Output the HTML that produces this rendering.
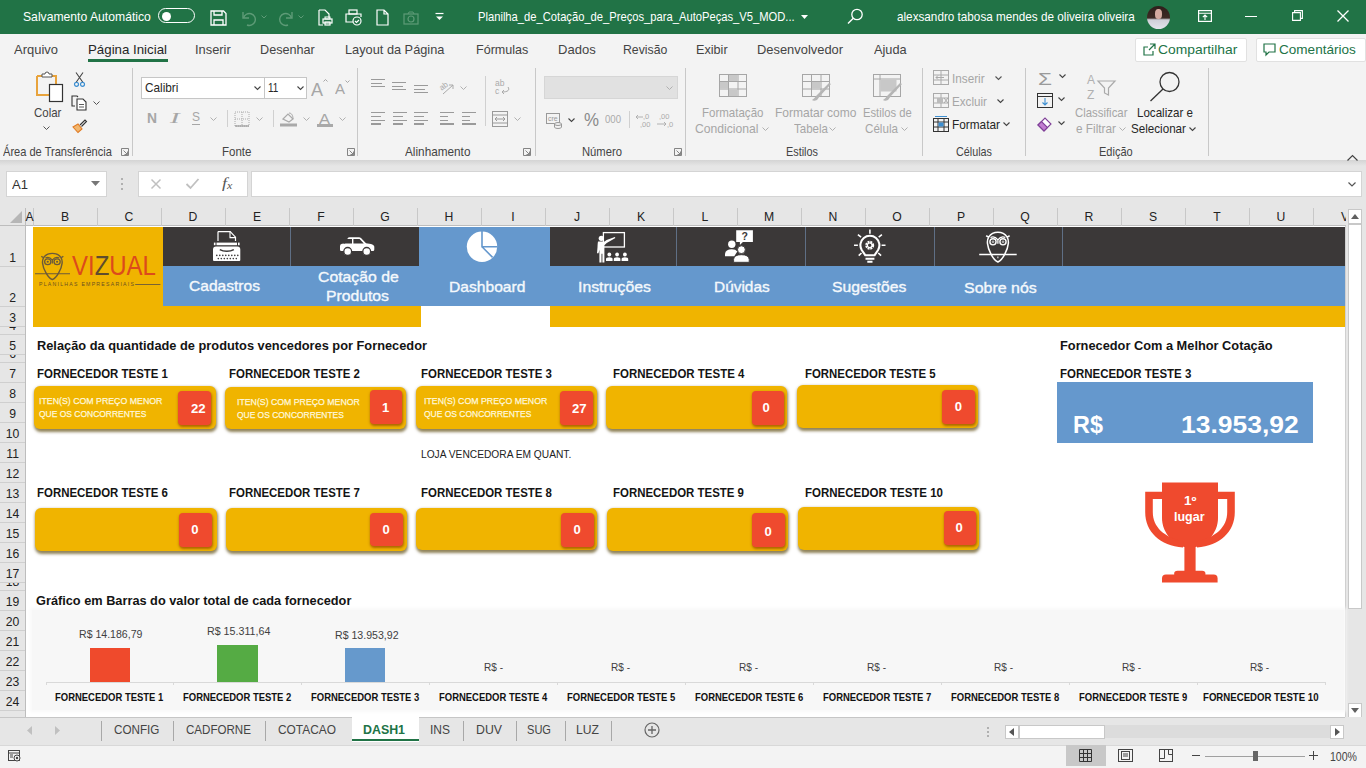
<!DOCTYPE html>
<html><head><meta charset="utf-8"><style>
html,body{margin:0;padding:0;}
body{width:1366px;height:768px;overflow:hidden;position:relative;background:#f3f3f3;font-family:"Liberation Sans",sans-serif;}
.t{position:absolute;white-space:nowrap;line-height:1;transform-origin:0 0;}
.r{position:absolute;}
svg.r{overflow:visible;}
</style></head><body>
<div class="r" style="left:0.00px;top:0.00px;width:1366.00px;height:34.00px;background:#217346;"></div>
<div class="t" style="left:23.00px;top:11.17px;font-size:12.20px;color:#fff;transform:scaleX(0.9986);">Salvamento Automático</div>
<div class="r" style="left:158px;top:8px;width:35px;height:13px;border:1.5px solid #fff;border-radius:9px;"></div>
<div class="r" style="left:161.5px;top:11.5px;width:9px;height:9px;background:#fff;border-radius:50%;"></div>
<svg class="r" style="left:210.00px;top:10.00px;" width="17" height="16" viewBox="0 0 17 16"><path d="M1 1h12.5l2.5 2.5V15H1z" fill="none" stroke="#fff" stroke-width="1.3"/><path d="M4 1v4h8V1M4 15v-5h9v5" fill="none" stroke="#fff" stroke-width="1.3"/></svg>
<svg class="r" style="left:240.00px;top:10.00px;" width="17" height="16" viewBox="0 0 17 16"><path d="M3 2v6h6" fill="none" stroke="#5e9b77" stroke-width="1.4"/><path d="M3.5 8A6 6 0 1 1 7 15" fill="none" stroke="#5e9b77" stroke-width="1.4"/></svg>
<svg class="r" style="left:261.00px;top:15.00px;" width="6" height="4" viewBox="0 0 6 4"><path d="M0.5 0.5l2.5 2.5 2.5-2.5" fill="none" stroke="#5e9b77" stroke-width="1"/></svg>
<svg class="r" style="left:278.00px;top:10.00px;" width="17" height="16" viewBox="0 0 17 16"><path d="M14 2v6H8" fill="none" stroke="#5e9b77" stroke-width="1.4"/><path d="M13.5 8A6 6 0 1 0 10 15" fill="none" stroke="#5e9b77" stroke-width="1.4"/></svg>
<svg class="r" style="left:298.00px;top:15.00px;" width="6" height="4" viewBox="0 0 6 4"><path d="M0.5 0.5l2.5 2.5 2.5-2.5" fill="none" stroke="#5e9b77" stroke-width="1"/></svg>
<svg class="r" style="left:318.00px;top:9.00px;" width="15" height="17" viewBox="0 0 15 17"><path d="M1 1h6l4 4v4M1 1v15h4" fill="none" stroke="#fff" stroke-width="1.2"/><rect x="5" y="10" width="9" height="4" fill="none" stroke="#fff" stroke-width="1.2"/><rect x="7" y="8" width="5" height="2" fill="none" stroke="#fff"/><rect x="7" y="13" width="5" height="3" fill="none" stroke="#fff" stroke-width="1.2"/></svg>
<svg class="r" style="left:345.00px;top:9.00px;" width="17" height="17" viewBox="0 0 17 17"><rect x="4" y="1" width="8" height="4" fill="none" stroke="#fff" stroke-width="1.2"/><path d="M8 13H1V5h15v3" fill="none" stroke="#fff" stroke-width="1.2"/><circle cx="12" cy="12" r="4" fill="none" stroke="#fff" stroke-width="1.2"/><path d="M10 12l1.5 1.5 2.5-2.5" fill="none" stroke="#fff" stroke-width="1.2"/></svg>
<svg class="r" style="left:376.00px;top:9.00px;" width="13" height="17" viewBox="0 0 13 17"><path d="M1 1h7l4 4v11H1z M8 1v4h4" fill="none" stroke="#fff" stroke-width="1.2"/></svg>
<svg class="r" style="left:403.00px;top:11.00px;" width="16" height="14" viewBox="0 0 16 14"><rect x="1" y="3" width="14" height="10" fill="none" stroke="#5e9b77" stroke-width="1.2"/><circle cx="8" cy="8" r="3" fill="none" stroke="#5e9b77" stroke-width="1.2"/><path d="M5 3l1-2h4l1 2" fill="none" stroke="#5e9b77"/></svg>
<svg class="r" style="left:435.00px;top:13.00px;" width="9" height="8" viewBox="0 0 9 8"><path d="M0.5 0.5h8" stroke="#fff" stroke-width="1.2"/><path d="M1 3.5l3.5 3.5 3.5-3.5z" fill="#fff"/></svg>
<div class="t" style="left:478.00px;top:11.17px;font-size:12.20px;color:#fff;transform:scaleX(0.9182);">Planilha_de_Cotação_de_Preços_para_AutoPeças_V5_MOD...</div>
<svg class="r" style="left:801.00px;top:15.00px;" width="7" height="4" viewBox="0 0 7 4"><path d="M0 0h7L3.5 4z" fill="#fff"/></svg>
<svg class="r" style="left:847.00px;top:8.00px;" width="17" height="17" viewBox="0 0 17 17"><circle cx="10" cy="6.5" r="5.2" fill="none" stroke="#fff" stroke-width="1.3"/><path d="M6.3 10.2L1 15.5" stroke="#fff" stroke-width="1.4"/></svg>
<div class="t" style="left:897.00px;top:11.17px;font-size:12.20px;color:#fff;transform:scaleX(0.9615);">alexsandro tabosa mendes de oliveira oliveira</div>
<div class="r" style="left:1146.5px;top:6px;width:23px;height:23px;border-radius:50%;overflow:hidden;background:linear-gradient(#2e1f1b 0%,#3d2a24 52%,#cfcfd8 60%,#e4e4ec 100%);"><div style="position:absolute;left:8.5px;top:3px;width:7px;height:10px;border-radius:45%;background:#d4aaa0;"></div></div>
<svg class="r" style="left:1198.00px;top:10.00px;" width="14" height="12" viewBox="0 0 14 12"><rect x="0.6" y="0.6" width="12.8" height="10.8" fill="none" stroke="#fff" stroke-width="1.2"/><path d="M0.6 3.2h12.8M7 10V5M4.8 7.2L7 5l2.2 2.2" fill="none" stroke="#fff" stroke-width="1.1"/></svg>
<div class="r" style="left:1245.00px;top:16.00px;width:12.00px;height:1.20px;background:#fff;"></div>
<svg class="r" style="left:1292.00px;top:10.00px;" width="11" height="11" viewBox="0 0 11 11"><path d="M0.6 2.6h7.8v7.8H0.6z M2.6 2.6V0.6h7.8v7.8H8.4" fill="none" stroke="#fff" stroke-width="1.1"/></svg>
<svg class="r" style="left:1337.00px;top:10.00px;" width="12" height="12" viewBox="0 0 12 12"><path d="M0.5 0.5l11 11M11.5 0.5l-11 11" stroke="#fff" stroke-width="1.3"/></svg>
<div class="r" style="left:0.00px;top:34.00px;width:1366.00px;height:31.00px;background:#f3f3f3;"></div>
<div class="t" style="left:14.00px;top:44.16px;font-size:12.80px;color:#444;transform:scaleX(1.0138);">Arquivo</div>
<div class="t" style="left:88.20px;top:44.16px;font-size:12.80px;color:#262626;transform:scaleX(1.0376);">Página Inicial</div>
<div class="t" style="left:195.30px;top:44.16px;font-size:12.80px;color:#444;transform:scaleX(1.0038);">Inserir</div>
<div class="t" style="left:260.00px;top:44.16px;font-size:12.80px;color:#444;transform:scaleX(0.9874);">Desenhar</div>
<div class="t" style="left:345.00px;top:44.16px;font-size:12.80px;color:#444;transform:scaleX(0.9976);">Layout da Página</div>
<div class="t" style="left:476.20px;top:44.16px;font-size:12.80px;color:#444;transform:scaleX(0.9804);">Fórmulas</div>
<div class="t" style="left:558.00px;top:44.16px;font-size:12.80px;color:#444;transform:scaleX(1.0189);">Dados</div>
<div class="t" style="left:623.00px;top:44.16px;font-size:12.80px;color:#444;transform:scaleX(0.9579);">Revisão</div>
<div class="t" style="left:695.80px;top:44.16px;font-size:12.80px;color:#444;transform:scaleX(0.9873);">Exibir</div>
<div class="t" style="left:757.30px;top:44.16px;font-size:12.80px;color:#444;transform:scaleX(1.0084);">Desenvolvedor</div>
<div class="t" style="left:874.00px;top:44.16px;font-size:12.80px;color:#444;transform:scaleX(0.9958);">Ajuda</div>
<div class="r" style="left:88.00px;top:59.00px;width:80.00px;height:3.00px;background:#217346;"></div>
<div class="r" style="left:1135px;top:38px;width:110px;height:22px;background:#fff;border:1px solid #e1e1e1;border-radius:2px;"></div>
<svg class="r" style="left:1142.00px;top:42.00px;" width="15" height="15" viewBox="0 0 15 15"><path d="M8 2h5v5M13 2L7 8M11 9v4H2V5h4" fill="none" stroke="#217346" stroke-width="1.2"/></svg>
<div class="t" style="left:1157.70px;top:43.66px;font-size:12.80px;color:#217346;transform:scaleX(1.0823);">Compartilhar</div>
<div class="r" style="left:1256px;top:38px;width:108px;height:22px;background:#fff;border:1px solid #e1e1e1;border-radius:2px;"></div>
<svg class="r" style="left:1263.00px;top:43.00px;" width="13" height="13" viewBox="0 0 13 13"><path d="M1 1h11v8H6l-3 3V9H1z" fill="none" stroke="#217346" stroke-width="1.2"/></svg>
<div class="t" style="left:1278.80px;top:43.66px;font-size:12.80px;color:#217346;transform:scaleX(1.0584);">Comentários</div>
<div class="r" style="left:0.00px;top:65.00px;width:1366.00px;height:95.00px;background:#f3f3f3;"></div>
<div class="r" style="left:0;top:160px;width:1366px;height:6px;background:linear-gradient(#d4d4d4,#e6e6e6);"></div>
<div class="r" style="left:132.00px;top:68.00px;width:1.00px;height:88.00px;background:#c8c8c8;"></div>
<div class="r" style="left:357.00px;top:68.00px;width:1.00px;height:88.00px;background:#c8c8c8;"></div>
<div class="r" style="left:534.60px;top:68.00px;width:1.00px;height:88.00px;background:#c8c8c8;"></div>
<div class="r" style="left:684.60px;top:68.00px;width:1.00px;height:88.00px;background:#c8c8c8;"></div>
<div class="r" style="left:921.50px;top:68.00px;width:1.00px;height:88.00px;background:#c8c8c8;"></div>
<div class="r" style="left:1025.00px;top:68.00px;width:1.00px;height:88.00px;background:#c8c8c8;"></div>
<div class="r" style="left:1207.80px;top:68.00px;width:1.00px;height:88.00px;background:#c8c8c8;"></div>
<div class="t" style="left:3.30px;top:146.17px;font-size:12.20px;color:#444;transform:scaleX(0.9080);">Área de Transferência</div>
<div class="t" style="left:222.00px;top:146.17px;font-size:12.20px;color:#444;transform:scaleX(0.9456);">Fonte</div>
<div class="t" style="left:405.00px;top:146.17px;font-size:12.20px;color:#444;transform:scaleX(0.9657);">Alinhamento</div>
<div class="t" style="left:581.80px;top:146.17px;font-size:12.20px;color:#444;transform:scaleX(0.9218);">Número</div>
<div class="t" style="left:786.40px;top:146.17px;font-size:12.20px;color:#444;transform:scaleX(0.8905);">Estilos</div>
<div class="t" style="left:955.60px;top:146.17px;font-size:12.20px;color:#444;transform:scaleX(0.8848);">Células</div>
<div class="t" style="left:1099.00px;top:146.17px;font-size:12.20px;color:#444;transform:scaleX(0.9034);">Edição</div>
<svg class="r" style="left:121.00px;top:148.00px;" width="8" height="8" viewBox="0 0 8 8"><path d="M0.5 0.5h7v7h-7z" fill="none" stroke="#777" stroke-width="0.9"/><path d="M2.5 2.5l4 4M6.5 3.5v3h-3" fill="none" stroke="#777" stroke-width="0.9"/></svg>
<svg class="r" style="left:347.00px;top:148.00px;" width="8" height="8" viewBox="0 0 8 8"><path d="M0.5 0.5h7v7h-7z" fill="none" stroke="#777" stroke-width="0.9"/><path d="M2.5 2.5l4 4M6.5 3.5v3h-3" fill="none" stroke="#777" stroke-width="0.9"/></svg>
<svg class="r" style="left:523.00px;top:148.00px;" width="8" height="8" viewBox="0 0 8 8"><path d="M0.5 0.5h7v7h-7z" fill="none" stroke="#777" stroke-width="0.9"/><path d="M2.5 2.5l4 4M6.5 3.5v3h-3" fill="none" stroke="#777" stroke-width="0.9"/></svg>
<svg class="r" style="left:673.50px;top:148.00px;" width="8" height="8" viewBox="0 0 8 8"><path d="M0.5 0.5h7v7h-7z" fill="none" stroke="#777" stroke-width="0.9"/><path d="M2.5 2.5l4 4M6.5 3.5v3h-3" fill="none" stroke="#777" stroke-width="0.9"/></svg>
<svg class="r" style="left:36.00px;top:71.00px;" width="28" height="32" viewBox="0 0 28 32"><path d="M1 5h5M15 5h5V24H1V5" fill="none" stroke="#e8a33c" stroke-width="2"/><path d="M6 6V3h3a2 2 0 0 1 4 0h3v3z" fill="#fff" stroke="#555" stroke-width="1"/><rect x="13.5" y="13.5" width="13" height="17" fill="#fff" stroke="#333" stroke-width="1.2"/></svg>
<div class="t" style="left:33.60px;top:107.16px;font-size:12.80px;color:#444;transform:scaleX(0.8957);">Colar</div>
<svg class="r" style="left:43.00px;top:126.00px;" width="7" height="4" viewBox="0 0 7 4"><path d="M0.5 0.5l3 3 3-3" fill="none" stroke="#555" stroke-width="1"/></svg>
<svg class="r" style="left:74.00px;top:72.00px;" width="11" height="15" viewBox="0 0 11 15"><path d="M2 0.5l7 10M9 0.5l-7 10" stroke="#444" stroke-width="1.1"/><circle cx="2.5" cy="12.3" r="2" fill="none" stroke="#3d8fd1" stroke-width="1.2"/><circle cx="8.5" cy="12.3" r="2" fill="none" stroke="#3d8fd1" stroke-width="1.2"/></svg>
<svg class="r" style="left:71.00px;top:95.00px;" width="16" height="16" viewBox="0 0 16 16"><path d="M4 11H1V1h5l1 1" fill="none" stroke="#333" stroke-width="1.1"/><path d="M6 4h6l3 3v8H6z" fill="#fff" stroke="#333" stroke-width="1.1"/><path d="M8 9.5h5M8 12h5" stroke="#333" stroke-width="0.8"/></svg>
<svg class="r" style="left:93.00px;top:101.00px;" width="7" height="4" viewBox="0 0 7 4"><path d="M0.5 0.5l3 3 3-3" fill="none" stroke="#555" stroke-width="1"/></svg>
<svg class="r" style="left:72.00px;top:119.00px;" width="15" height="14" viewBox="0 0 15 14"><path d="M1 8l5-3 4 5-4 3.5z" fill="#f2b66d" stroke="#e07b24" stroke-width="1.1"/><path d="M8 6l5-5 1.5 1.5-5 5" fill="none" stroke="#333" stroke-width="1.1"/></svg>
<div class="r" style="left:141px;top:77px;width:164px;height:20px;background:#fff;border:1px solid #c6c6c6;"></div>
<div class="r" style="left:264.00px;top:78.00px;width:1.00px;height:20.00px;background:#c6c6c6;"></div>
<div class="t" style="left:144.60px;top:81.67px;font-size:12.20px;color:#262626;transform:scaleX(0.9660);">Calibri</div>
<div class="t" style="left:267.70px;top:81.67px;font-size:12.20px;color:#262626;transform:scaleX(0.8133);">11</div>
<svg class="r" style="left:254.00px;top:86.00px;" width="7" height="4" viewBox="0 0 7 4"><path d="M0.5 0.5l3 3 3-3" fill="none" stroke="#444" stroke-width="1.1"/></svg>
<svg class="r" style="left:297.00px;top:86.00px;" width="7" height="4" viewBox="0 0 7 4"><path d="M0.5 0.5l3 3 3-3" fill="none" stroke="#444" stroke-width="1.1"/></svg>
<div class="t" style="left:311.00px;top:79.91px;font-size:19.00px;color:#a6a6a6;transform:scaleX(0.9469);">A</div>
<svg class="r" style="left:323.00px;top:79.00px;" width="5" height="3" viewBox="0 0 5 3"><path d="M0.5 2.5l2-2 2 2" fill="none" stroke="#a6a6a6"/></svg>
<div class="t" style="left:334.50px;top:81.30px;font-size:15.00px;color:#a6a6a6;transform:scaleX(0.9995);">A</div>
<svg class="r" style="left:345.00px;top:80.00px;" width="5" height="3" viewBox="0 0 5 3"><path d="M0.5 0.5l2 2 2-2" fill="none" stroke="#a6a6a6"/></svg>
<div class="t" style="left:146.50px;top:110.72px;font-size:14.50px;font-weight:bold;color:#a6a6a6;transform:scaleX(0.9550);">N</div>
<div class="t" style="left:170.00px;top:110.72px;font-size:14.50px;color:#a6a6a6;transform:scaleX(1.9860);font-style:italic;font-family:'Liberation Serif',serif;">I</div>
<div class="t" style="left:192.00px;top:110.92px;font-size:12.50px;color:#a6a6a6;transform:scaleX(0.9595);">S</div>
<div class="r" style="left:192.00px;top:124.00px;width:8.00px;height:1.00px;background:#a6a6a6;"></div>
<svg class="r" style="left:210.00px;top:117.00px;" width="7" height="4" viewBox="0 0 7 4"><path d="M0.5 0.5l3 3 3-3" fill="none" stroke="#b0b0b0" stroke-width="1"/></svg>
<svg class="r" style="left:256.00px;top:117.00px;" width="7" height="4" viewBox="0 0 7 4"><path d="M0.5 0.5l3 3 3-3" fill="none" stroke="#b0b0b0" stroke-width="1"/></svg>
<svg class="r" style="left:303.00px;top:117.00px;" width="7" height="4" viewBox="0 0 7 4"><path d="M0.5 0.5l3 3 3-3" fill="none" stroke="#b0b0b0" stroke-width="1"/></svg>
<svg class="r" style="left:339.00px;top:117.00px;" width="7" height="4" viewBox="0 0 7 4"><path d="M0.5 0.5l3 3 3-3" fill="none" stroke="#b0b0b0" stroke-width="1"/></svg>
<div class="r" style="left:226.50px;top:110.00px;width:1.00px;height:17.00px;background:#d0d0d0;"></div>
<div class="r" style="left:272.80px;top:110.00px;width:1.00px;height:17.00px;background:#d0d0d0;"></div>
<svg class="r" style="left:234.00px;top:111.00px;" width="16" height="16" viewBox="0 0 16 16"><path d="M1 1h14v14H1z M8 1v14 M1 8h14" fill="none" stroke="#aaa" stroke-width="1" stroke-dasharray="1 1"/><path d="M1 15h14" stroke="#999" stroke-width="1.2"/></svg>
<svg class="r" style="left:280.00px;top:110.00px;" width="17" height="17" viewBox="0 0 17 17"><path d="M3 9l5-5 5 5-4 3z" fill="none" stroke="#aaa" stroke-width="1.2"/><path d="M9 3c3 0 4 3 4 6" fill="none" stroke="#aaa"/><rect x="0" y="13.5" width="17" height="3" fill="#a9a9a9"/></svg>
<div class="t" style="left:319.00px;top:112.15px;font-size:14.00px;color:#a6a6a6;transform:scaleX(1.1779);">A</div>
<div class="r" style="left:317.00px;top:124.00px;width:16.00px;height:3.00px;background:#a9a9a9;"></div>
<div class="r" style="left:371.00px;top:79.00px;width:14.00px;height:1.20px;background:#9a9a9a;"></div>
<div class="r" style="left:371.00px;top:82.50px;width:11.00px;height:1.20px;background:#9a9a9a;"></div>
<div class="r" style="left:371.00px;top:86.00px;width:14.00px;height:1.20px;background:#9a9a9a;"></div>
<div class="r" style="left:392.00px;top:82.00px;width:14.00px;height:1.20px;background:#9a9a9a;"></div>
<div class="r" style="left:392.00px;top:85.50px;width:11.00px;height:1.20px;background:#9a9a9a;"></div>
<div class="r" style="left:392.00px;top:89.00px;width:14.00px;height:1.20px;background:#9a9a9a;"></div>
<div class="r" style="left:414.00px;top:85.00px;width:14.00px;height:1.20px;background:#9a9a9a;"></div>
<div class="r" style="left:414.00px;top:88.50px;width:11.00px;height:1.20px;background:#9a9a9a;"></div>
<div class="r" style="left:414.00px;top:92.00px;width:14.00px;height:1.20px;background:#9a9a9a;"></div>
<svg class="r" style="left:439.00px;top:79.00px;" width="17" height="17" viewBox="0 0 17 17"><text x="1" y="9" font-size="8" fill="#aaa" font-family="Liberation Sans" transform="rotate(-35 6 8)">ab</text><path d="M4 15l10-9M14 6v4M14 6h-4" fill="none" stroke="#aaa" stroke-width="1"/></svg>
<svg class="r" style="left:460.00px;top:86.00px;" width="7" height="4" viewBox="0 0 7 4"><path d="M0.5 0.5l3 3 3-3" fill="none" stroke="#b0b0b0" stroke-width="1"/></svg>
<div class="r" style="left:371.00px;top:112.00px;width:14.00px;height:1.20px;background:#9a9a9a;"></div>
<div class="r" style="left:371.00px;top:115.80px;width:10.00px;height:1.20px;background:#9a9a9a;"></div>
<div class="r" style="left:371.00px;top:119.60px;width:14.00px;height:1.20px;background:#9a9a9a;"></div>
<div class="r" style="left:371.00px;top:123.40px;width:10.00px;height:1.20px;background:#9a9a9a;"></div>
<div class="r" style="left:393.00px;top:112.00px;width:14.00px;height:1.20px;background:#9a9a9a;"></div>
<div class="r" style="left:393.00px;top:115.80px;width:10.00px;height:1.20px;background:#9a9a9a;"></div>
<div class="r" style="left:393.00px;top:119.60px;width:14.00px;height:1.20px;background:#9a9a9a;"></div>
<div class="r" style="left:393.00px;top:123.40px;width:10.00px;height:1.20px;background:#9a9a9a;"></div>
<div class="r" style="left:414.00px;top:112.00px;width:14.00px;height:1.20px;background:#9a9a9a;"></div>
<div class="r" style="left:414.00px;top:115.80px;width:10.00px;height:1.20px;background:#9a9a9a;"></div>
<div class="r" style="left:414.00px;top:119.60px;width:14.00px;height:1.20px;background:#9a9a9a;"></div>
<div class="r" style="left:414.00px;top:123.40px;width:10.00px;height:1.20px;background:#9a9a9a;"></div>
<div class="r" style="left:440.00px;top:112.00px;width:14.00px;height:1.20px;background:#9a9a9a;"></div>
<div class="r" style="left:440.00px;top:115.80px;width:8.00px;height:1.20px;background:#9a9a9a;"></div>
<div class="r" style="left:440.00px;top:119.60px;width:8.00px;height:1.20px;background:#9a9a9a;"></div>
<div class="r" style="left:440.00px;top:123.40px;width:14.00px;height:1.20px;background:#9a9a9a;"></div>
<div class="r" style="left:462.00px;top:112.00px;width:14.00px;height:1.20px;background:#9a9a9a;"></div>
<div class="r" style="left:462.00px;top:115.80px;width:8.00px;height:1.20px;background:#9a9a9a;"></div>
<div class="r" style="left:462.00px;top:119.60px;width:8.00px;height:1.20px;background:#9a9a9a;"></div>
<div class="r" style="left:462.00px;top:123.40px;width:14.00px;height:1.20px;background:#9a9a9a;"></div>
<svg class="r" style="left:494.00px;top:78.00px;" width="16" height="17" viewBox="0 0 16 17"><text x="1" y="8" font-size="8.5" fill="#aaa" font-family="Liberation Sans">ab</text><text x="1" y="15.5" font-size="8.5" fill="#aaa" font-family="Liberation Sans">c</text><path d="M14 9c2 3 0 5-6 5M10 12l-2 2 2 2" fill="none" stroke="#aaa" stroke-width="1"/></svg>
<div class="r" style="left:484.60px;top:76.00px;width:1.00px;height:50.00px;background:#d0d0d0;"></div>
<svg class="r" style="left:492.00px;top:111.00px;" width="16" height="16" viewBox="0 0 16 16"><rect x="0.5" y="0.5" width="15" height="15" fill="none" stroke="#999" stroke-width="1"/><path d="M0.5 4h15M0.5 12h15M3 8h10M3 8l2-2M3 8l2 2M13 8l-2-2M13 8l-2 2" fill="none" stroke="#999" stroke-width="1"/></svg>
<svg class="r" style="left:514.00px;top:117.00px;" width="7" height="4" viewBox="0 0 7 4"><path d="M0.5 0.5l3 3 3-3" fill="none" stroke="#b0b0b0" stroke-width="1"/></svg>
<div class="r" style="left:543.6px;top:76px;width:132px;height:21px;background:#e1e1e1;border:1px solid #d6d6d6;"></div>
<svg class="r" style="left:666.00px;top:86.00px;" width="7" height="4" viewBox="0 0 7 4"><path d="M0.5 0.5l3 3 3-3" fill="none" stroke="#b0b0b0" stroke-width="1"/></svg>
<svg class="r" style="left:546.00px;top:113.00px;" width="16" height="15" viewBox="0 0 16 15"><rect x="0.5" y="0.5" width="13" height="10" fill="none" stroke="#999"/><text x="2" y="8" font-size="7" fill="#999" font-family="Liberation Sans">cre</text><ellipse cx="12" cy="11" rx="3.5" ry="1.5" fill="#eee" stroke="#999"/><path d="M8.5 11v3a3.5 1.5 0 0 0 7 0v-3" fill="none" stroke="#999"/></svg>
<svg class="r" style="left:568.00px;top:118.00px;" width="7" height="4" viewBox="0 0 7 4"><path d="M0.5 0.5l3 3 3-3" fill="none" stroke="#444" stroke-width="1.1"/></svg>
<div class="t" style="left:583.80px;top:110.76px;font-size:18.00px;color:#8a8a8a;transform:scaleX(0.9372);">%</div>
<div class="t" style="left:605.00px;top:114.53px;font-size:10.00px;color:#aaa;transform:scaleX(0.9589);">000</div>
<div class="r" style="left:628.70px;top:111.00px;width:1.00px;height:17.00px;background:#d0d0d0;"></div>
<svg class="r" style="left:635.00px;top:112.00px;" width="18" height="16" viewBox="0 0 18 16"><text x="8" y="7" font-size="7.5" fill="#aaa" font-family="Liberation Sans">,0</text><text x="5" y="15" font-size="7.5" fill="#aaa" font-family="Liberation Sans">,00</text><path d="M1 5h7M1 5l2-2M1 5l2 2" fill="none" stroke="#aaa" stroke-width="0.9"/></svg>
<svg class="r" style="left:656.00px;top:112.00px;" width="18" height="16" viewBox="0 0 18 16"><text x="3" y="7" font-size="7.5" fill="#aaa" font-family="Liberation Sans">,00</text><text x="11" y="15" font-size="7.5" fill="#aaa" font-family="Liberation Sans">,0</text><path d="M1 12h9M10 12l-2-2M10 12l-2 2" fill="none" stroke="#aaa" stroke-width="0.9"/></svg>
<svg class="r" style="left:719.00px;top:74.00px;" width="28" height="23" viewBox="0 0 28 23"><rect x="0.5" y="0.5" width="27" height="22" fill="none" stroke="#a6a6a6" stroke-width="1"/><path d="M0.5 7.5h27M0.5 15h27M9.5 0.5v22M19 0.5v22" stroke="#a6a6a6"/><rect x="10" y="1" width="8.5" height="6" fill="#c8c8c8"/><rect x="1" y="8" width="8" height="6.5" fill="#c8c8c8"/><rect x="10" y="15.5" width="8.5" height="6.5" fill="#c8c8c8"/></svg>
<div class="t" style="left:701.80px;top:107.37px;font-size:12.20px;color:#a6a6a6;transform:scaleX(0.9448);">Formatação</div>
<div class="t" style="left:695.40px;top:122.67px;font-size:12.20px;color:#a6a6a6;transform:scaleX(0.9960);">Condicional</div>
<svg class="r" style="left:762.00px;top:127.00px;" width="6" height="4" viewBox="0 0 6 4"><path d="M0.5 0.5l3 3 3-3" fill="none" stroke="#b0b0b0" stroke-width="1"/></svg>
<svg class="r" style="left:802.00px;top:74.00px;" width="30" height="27" viewBox="0 0 30 27"><rect x="0.5" y="0.5" width="27" height="22" fill="none" stroke="#a6a6a6"/><path d="M0.5 7.5h27M0.5 15h27M9.5 0.5v22M19 0.5v22" stroke="#a6a6a6"/><rect x="10" y="8" width="8.5" height="6.5" fill="#c8c8c8"/><path d="M29 10L18 22l-3 4c-2 1-4 1-5 0 2-1 3-3 5-5L27 9z" fill="#b5b5b5"/></svg>
<div class="t" style="left:775.40px;top:107.37px;font-size:12.20px;color:#a6a6a6;transform:scaleX(0.9866);">Formatar como</div>
<div class="t" style="left:794.00px;top:122.67px;font-size:12.20px;color:#a6a6a6;transform:scaleX(0.9457);">Tabela</div>
<svg class="r" style="left:829.00px;top:127.00px;" width="6" height="4" viewBox="0 0 6 4"><path d="M0.5 0.5l3 3 3-3" fill="none" stroke="#b0b0b0" stroke-width="1"/></svg>
<svg class="r" style="left:873.00px;top:74.00px;" width="30" height="27" viewBox="0 0 30 27"><rect x="0.5" y="0.5" width="27" height="22" fill="none" stroke="#a6a6a6"/><path d="M0.5 5h27M7 0.5v22" stroke="#a6a6a6"/><rect x="7.5" y="5.5" width="16" height="12" fill="#c8c8c8"/><path d="M29 10L18 22l-3 4c-2 1-4 1-5 0 2-1 3-3 5-5L27 9z" fill="#b5b5b5"/></svg>
<div class="t" style="left:862.60px;top:107.37px;font-size:12.20px;color:#a6a6a6;transform:scaleX(0.9207);">Estilos de</div>
<div class="t" style="left:865.00px;top:122.67px;font-size:12.20px;color:#a6a6a6;transform:scaleX(0.9541);">Célula</div>
<svg class="r" style="left:901.00px;top:127.00px;" width="6" height="4" viewBox="0 0 6 4"><path d="M0.5 0.5l3 3 3-3" fill="none" stroke="#b0b0b0" stroke-width="1"/></svg>
<svg class="r" style="left:933.00px;top:70.00px;" width="16" height="15" viewBox="0 0 16 15"><rect x="0.5" y="0.5" width="15" height="14" fill="none" stroke="#aaa"/><path d="M0.5 5h15M0.5 10h15M8 0.5v14" stroke="#aaa"/><path d="M3 7.5h8M3 7.5l2-2M3 7.5l2 2" fill="none" stroke="#aaa"/></svg>
<div class="t" style="left:952.00px;top:73.17px;font-size:12.20px;color:#a6a6a6;transform:scaleX(0.9617);">Inserir</div>
<svg class="r" style="left:995.00px;top:76.00px;" width="7" height="4" viewBox="0 0 7 4"><path d="M0.5 0.5l3 3 3-3" fill="none" stroke="#555" stroke-width="1.1"/></svg>
<svg class="r" style="left:933.00px;top:93.00px;" width="16" height="15" viewBox="0 0 16 15"><rect x="0.5" y="0.5" width="15" height="14" fill="none" stroke="#aaa"/><path d="M0.5 5h15M0.5 10h15M8 0.5v14" stroke="#aaa"/><rect x="4" y="5" width="6" height="5" fill="#bbb"/><path d="M11 5l4 5M15 5l-4 5" stroke="#aaa"/></svg>
<div class="t" style="left:952.00px;top:96.17px;font-size:12.20px;color:#a6a6a6;transform:scaleX(0.9561);">Excluir</div>
<svg class="r" style="left:997.00px;top:99.00px;" width="7" height="4" viewBox="0 0 7 4"><path d="M0.5 0.5l3 3 3-3" fill="none" stroke="#444" stroke-width="1.1"/></svg>
<svg class="r" style="left:933.00px;top:116.00px;" width="16" height="16" viewBox="0 0 16 16"><rect x="0.5" y="2.5" width="15" height="13" fill="none" stroke="#333"/><path d="M0.5 6h15M0.5 11h15M5 2.5v13M11 2.5v13" stroke="#333"/><rect x="5.5" y="6.5" width="5" height="4" fill="#3d8fd1"/><path d="M2 0.5h12" stroke="#3d8fd1"/></svg>
<div class="t" style="left:952.00px;top:118.67px;font-size:12.20px;color:#262626;transform:scaleX(0.9699);">Formatar</div>
<svg class="r" style="left:1003.00px;top:122.00px;" width="7" height="4" viewBox="0 0 7 4"><path d="M0.5 0.5l3 3 3-3" fill="none" stroke="#444" stroke-width="1.1"/></svg>
<div class="t" style="left:1037.80px;top:70.61px;font-size:17.00px;color:#9a9a9a;transform:scaleX(1.3321);">Σ</div>
<svg class="r" style="left:1059.00px;top:74.00px;" width="7" height="4" viewBox="0 0 7 4"><path d="M0.5 0.5l3 3 3-3" fill="none" stroke="#444" stroke-width="1.1"/></svg>
<svg class="r" style="left:1037.00px;top:93.00px;" width="16" height="15" viewBox="0 0 16 15"><rect x="0.5" y="0.5" width="15" height="14" fill="none" stroke="#333"/><path d="M0.5 3.5h15" stroke="#333"/><path d="M8 5v7M5.5 9.5L8 12l2.5-2.5" fill="none" stroke="#3d8fd1" stroke-width="1.1"/></svg>
<svg class="r" style="left:1058.00px;top:97.00px;" width="7" height="4" viewBox="0 0 7 4"><path d="M0.5 0.5l3 3 3-3" fill="none" stroke="#444" stroke-width="1.1"/></svg>
<svg class="r" style="left:1037.00px;top:117.00px;" width="16" height="14" viewBox="0 0 16 14"><path d="M1 8l7-7 6 6-7 7z" fill="#fff" stroke="#7f3f98" stroke-width="1.1"/><path d="M1 8l3.5-3.5 6 6L7 14z" fill="#c27ed1" stroke="#7f3f98" stroke-width="1.1"/></svg>
<svg class="r" style="left:1058.00px;top:121.00px;" width="7" height="4" viewBox="0 0 7 4"><path d="M0.5 0.5l3 3 3-3" fill="none" stroke="#444" stroke-width="1.1"/></svg>
<svg class="r" style="left:1086.00px;top:73.00px;" width="30" height="27" viewBox="0 0 30 27"><text x="1" y="11" font-size="12" fill="#b0b0b0" font-family="Liberation Sans">A</text><text x="1" y="26" font-size="12" fill="#b0b0b0" font-family="Liberation Sans">Z</text><path d="M12 8h17l-6.5 7v7l-4-2v-5z" fill="none" stroke="#aaa" stroke-width="1.2"/></svg>
<div class="t" style="left:1074.50px;top:107.37px;font-size:12.20px;color:#a6a6a6;transform:scaleX(0.9331);">Classificar</div>
<div class="t" style="left:1076.00px;top:122.67px;font-size:12.20px;color:#a6a6a6;transform:scaleX(0.9674);">e Filtrar</div>
<svg class="r" style="left:1119.00px;top:127.00px;" width="6" height="4" viewBox="0 0 6 4"><path d="M0.5 0.5l3 3 3-3" fill="none" stroke="#b0b0b0" stroke-width="1"/></svg>
<svg class="r" style="left:1149.00px;top:71.00px;" width="32" height="31" viewBox="0 0 32 31"><circle cx="20.5" cy="11" r="9.5" fill="none" stroke="#333" stroke-width="1.3"/><path d="M14 18L1.5 30" stroke="#333" stroke-width="1.3"/></svg>
<div class="t" style="left:1136.50px;top:107.37px;font-size:12.20px;color:#262626;transform:scaleX(0.9491);">Localizar e</div>
<div class="t" style="left:1131.40px;top:122.67px;font-size:12.20px;color:#262626;transform:scaleX(0.9541);">Selecionar</div>
<svg class="r" style="left:1189.00px;top:127.00px;" width="7" height="4" viewBox="0 0 7 4"><path d="M0.5 0.5l3 3 3-3" fill="none" stroke="#444" stroke-width="1.1"/></svg>
<svg class="r" style="left:1347.00px;top:155.00px;" width="11" height="6" viewBox="0 0 11 6"><path d="M0.5 5.5l5-5 5 5" fill="none" stroke="#444" stroke-width="1.2"/></svg>
<div class="r" style="left:0.00px;top:166.00px;width:1366.00px;height:42.00px;background:#e6e6e6;"></div>
<div class="r" style="left:6px;top:171px;width:99px;height:24px;background:#fff;border:1px solid #d4d4d4;"></div>
<div class="t" style="left:12.00px;top:178.67px;font-size:12.20px;color:#333;transform:scaleX(1.0722);">A1</div>
<svg class="r" style="left:91.00px;top:181.00px;" width="9" height="5" viewBox="0 0 9 5"><path d="M0 0h9L4.5 5z" fill="#777"/></svg>
<div class="r" style="left:121.00px;top:178.00px;width:2.00px;height:2.00px;background:#b0b0b0;"></div>
<div class="r" style="left:121.00px;top:183.00px;width:2.00px;height:2.00px;background:#b0b0b0;"></div>
<div class="r" style="left:121.00px;top:188.00px;width:2.00px;height:2.00px;background:#b0b0b0;"></div>
<div class="r" style="left:137.5px;top:171px;width:108px;height:24px;background:#fff;border:1px solid #d4d4d4;"></div>
<svg class="r" style="left:151.00px;top:179.00px;" width="10" height="10" viewBox="0 0 10 10"><path d="M0.5 0.5l9 9M9.5 0.5l-9 9" stroke="#c0c0c0" stroke-width="1.5"/></svg>
<svg class="r" style="left:186.00px;top:178.00px;" width="13" height="11" viewBox="0 0 13 11"><path d="M0.5 6l4 4 8-9" fill="none" stroke="#c0c0c0" stroke-width="1.8"/></svg>
<div class="t" style="left:221.50px;top:177.15px;font-size:14.00px;color:#555;transform:scaleX(1.2856);font-style:italic;font-family:'Liberation Serif',serif;">f</div>
<div class="t" style="left:226.50px;top:180.53px;font-size:10.00px;color:#555;transform:scaleX(1.2000);font-style:italic;font-family:'Liberation Serif',serif;">x</div>
<div class="r" style="left:250.5px;top:171px;width:1109px;height:24px;background:#fff;border:1px solid #d4d4d4;"></div>
<svg class="r" style="left:1348.00px;top:182.00px;" width="8" height="5" viewBox="0 0 8 5"><path d="M0.5 0.5l3.5 3.5 3.5-3.5" fill="none" stroke="#555" stroke-width="1.2"/></svg>
<div class="r" style="left:0.00px;top:208.00px;width:1347.00px;height:18.00px;background:#e6e6e6;"></div>
<div class="r" style="left:0.00px;top:225.00px;width:1347.00px;height:1.00px;background:#bdbdbd;"></div>
<svg class="r" style="left:10.00px;top:211.00px;" width="12" height="12" viewBox="0 0 12 12"><path d="M12 0v12H0z" fill="#b6b6b6"/></svg>
<div class="r" style="left:25.00px;top:208.00px;width:1.00px;height:18.00px;background:#bdbdbd;"></div>
<div class="r" style="left:33.00px;top:208.00px;width:1.00px;height:18.00px;background:#c8c8c8;"></div>
<div class="t" style="left:25.43px;top:210.67px;font-size:12.20px;color:#222;">A</div>
<div class="r" style="left:97.00px;top:208.00px;width:1.00px;height:18.00px;background:#c8c8c8;"></div>
<div class="t" style="left:60.93px;top:210.67px;font-size:12.20px;color:#222;">B</div>
<div class="r" style="left:161.00px;top:208.00px;width:1.00px;height:18.00px;background:#c8c8c8;"></div>
<div class="t" style="left:124.59px;top:210.67px;font-size:12.20px;color:#222;">C</div>
<div class="r" style="left:225.00px;top:208.00px;width:1.00px;height:18.00px;background:#c8c8c8;"></div>
<div class="t" style="left:188.59px;top:210.67px;font-size:12.20px;color:#222;">D</div>
<div class="r" style="left:289.00px;top:208.00px;width:1.00px;height:18.00px;background:#c8c8c8;"></div>
<div class="t" style="left:252.93px;top:210.67px;font-size:12.20px;color:#222;">E</div>
<div class="r" style="left:353.00px;top:208.00px;width:1.00px;height:18.00px;background:#c8c8c8;"></div>
<div class="t" style="left:317.27px;top:210.67px;font-size:12.20px;color:#222;">F</div>
<div class="r" style="left:417.00px;top:208.00px;width:1.00px;height:18.00px;background:#c8c8c8;"></div>
<div class="t" style="left:380.26px;top:210.67px;font-size:12.20px;color:#222;">G</div>
<div class="r" style="left:481.00px;top:208.00px;width:1.00px;height:18.00px;background:#c8c8c8;"></div>
<div class="t" style="left:444.59px;top:210.67px;font-size:12.20px;color:#222;">H</div>
<div class="r" style="left:545.00px;top:208.00px;width:1.00px;height:18.00px;background:#c8c8c8;"></div>
<div class="t" style="left:511.31px;top:210.67px;font-size:12.20px;color:#222;">I</div>
<div class="r" style="left:609.00px;top:208.00px;width:1.00px;height:18.00px;background:#c8c8c8;"></div>
<div class="t" style="left:573.95px;top:210.67px;font-size:12.20px;color:#222;">J</div>
<div class="r" style="left:673.00px;top:208.00px;width:1.00px;height:18.00px;background:#c8c8c8;"></div>
<div class="t" style="left:636.93px;top:210.67px;font-size:12.20px;color:#222;">K</div>
<div class="r" style="left:737.00px;top:208.00px;width:1.00px;height:18.00px;background:#c8c8c8;"></div>
<div class="t" style="left:701.61px;top:210.67px;font-size:12.20px;color:#222;">L</div>
<div class="r" style="left:801.00px;top:208.00px;width:1.00px;height:18.00px;background:#c8c8c8;"></div>
<div class="t" style="left:763.92px;top:210.67px;font-size:12.20px;color:#222;">M</div>
<div class="r" style="left:865.00px;top:208.00px;width:1.00px;height:18.00px;background:#c8c8c8;"></div>
<div class="t" style="left:828.59px;top:210.67px;font-size:12.20px;color:#222;">N</div>
<div class="r" style="left:929.00px;top:208.00px;width:1.00px;height:18.00px;background:#c8c8c8;"></div>
<div class="t" style="left:892.26px;top:210.67px;font-size:12.20px;color:#222;">O</div>
<div class="r" style="left:993.00px;top:208.00px;width:1.00px;height:18.00px;background:#c8c8c8;"></div>
<div class="t" style="left:956.93px;top:210.67px;font-size:12.20px;color:#222;">P</div>
<div class="r" style="left:1057.00px;top:208.00px;width:1.00px;height:18.00px;background:#c8c8c8;"></div>
<div class="t" style="left:1020.26px;top:210.67px;font-size:12.20px;color:#222;">Q</div>
<div class="r" style="left:1121.00px;top:208.00px;width:1.00px;height:18.00px;background:#c8c8c8;"></div>
<div class="t" style="left:1084.59px;top:210.67px;font-size:12.20px;color:#222;">R</div>
<div class="r" style="left:1185.00px;top:208.00px;width:1.00px;height:18.00px;background:#c8c8c8;"></div>
<div class="t" style="left:1148.93px;top:210.67px;font-size:12.20px;color:#222;">S</div>
<div class="r" style="left:1249.00px;top:208.00px;width:1.00px;height:18.00px;background:#c8c8c8;"></div>
<div class="t" style="left:1213.27px;top:210.67px;font-size:12.20px;color:#222;">T</div>
<div class="r" style="left:1313.00px;top:208.00px;width:1.00px;height:18.00px;background:#c8c8c8;"></div>
<div class="t" style="left:1276.59px;top:210.67px;font-size:12.20px;color:#222;">U</div>
<div class="r" style="left:1377.00px;top:208.00px;width:1.00px;height:18.00px;background:#c8c8c8;"></div>
<div class="t" style="left:1341.00px;top:210.67px;font-size:12.20px;color:#222;">V</div>
<div class="r" style="left:0.00px;top:226.00px;width:25.00px;height:491.00px;background:#e6e6e6;"></div>
<div class="r" style="left:25.00px;top:226.00px;width:1.00px;height:491.00px;background:#bdbdbd;"></div>
<div class="r" style="left:0;top:226px;width:25px;height:491px;overflow:hidden;">
<div class="r" style="left:0.00px;top:40.00px;width:25.00px;height:1.00px;background:#cfcfcf;"></div>
<div class="t" style="left:9.21px;top:26.17px;font-size:12.20px;color:#222;">1</div>
<div class="r" style="left:0.00px;top:80.00px;width:25.00px;height:1.00px;background:#cfcfcf;"></div>
<div class="t" style="left:9.21px;top:66.17px;font-size:12.20px;color:#222;">2</div>
<div class="r" style="left:0.00px;top:100.00px;width:25.00px;height:1.00px;background:#cfcfcf;"></div>
<div class="t" style="left:9.21px;top:86.17px;font-size:12.20px;color:#222;">3</div>
<div class="r" style="left:0.00px;top:108.00px;width:25.00px;height:1.00px;background:#cfcfcf;"></div>
<div class="r" style="left:0;top:101px;width:25px;height:7px;overflow:hidden;">
<div class="t" style="left:9.21px;top:-7.13px;font-size:12.20px;color:#222;">4</div>
</div>
<div class="r" style="left:0.00px;top:128.00px;width:25.00px;height:1.00px;background:#cfcfcf;"></div>
<div class="t" style="left:9.21px;top:114.17px;font-size:12.20px;color:#222;">5</div>
<div class="r" style="left:0.00px;top:136.00px;width:25.00px;height:1.00px;background:#cfcfcf;"></div>
<div class="r" style="left:0;top:129px;width:25px;height:7px;overflow:hidden;">
<div class="t" style="left:9.21px;top:-7.13px;font-size:12.20px;color:#222;">6</div>
</div>
<div class="r" style="left:0.00px;top:156.00px;width:25.00px;height:1.00px;background:#cfcfcf;"></div>
<div class="t" style="left:9.21px;top:142.17px;font-size:12.20px;color:#222;">7</div>
<div class="r" style="left:0.00px;top:176.00px;width:25.00px;height:1.00px;background:#cfcfcf;"></div>
<div class="t" style="left:9.21px;top:162.17px;font-size:12.20px;color:#222;">8</div>
<div class="r" style="left:0.00px;top:196.00px;width:25.00px;height:1.00px;background:#cfcfcf;"></div>
<div class="t" style="left:9.21px;top:182.17px;font-size:12.20px;color:#222;">9</div>
<div class="r" style="left:0.00px;top:216.00px;width:25.00px;height:1.00px;background:#cfcfcf;"></div>
<div class="t" style="left:5.81px;top:202.17px;font-size:12.20px;color:#222;">10</div>
<div class="r" style="left:0.00px;top:236.00px;width:25.00px;height:1.00px;background:#cfcfcf;"></div>
<div class="t" style="left:6.27px;top:222.17px;font-size:12.20px;color:#222;">11</div>
<div class="r" style="left:0.00px;top:256.00px;width:25.00px;height:1.00px;background:#cfcfcf;"></div>
<div class="t" style="left:5.81px;top:242.17px;font-size:12.20px;color:#222;">12</div>
<div class="r" style="left:0.00px;top:276.00px;width:25.00px;height:1.00px;background:#cfcfcf;"></div>
<div class="t" style="left:5.81px;top:262.17px;font-size:12.20px;color:#222;">13</div>
<div class="r" style="left:0.00px;top:296.00px;width:25.00px;height:1.00px;background:#cfcfcf;"></div>
<div class="t" style="left:5.81px;top:282.17px;font-size:12.20px;color:#222;">14</div>
<div class="r" style="left:0.00px;top:316.00px;width:25.00px;height:1.00px;background:#cfcfcf;"></div>
<div class="t" style="left:5.81px;top:302.17px;font-size:12.20px;color:#222;">15</div>
<div class="r" style="left:0.00px;top:336.00px;width:25.00px;height:1.00px;background:#cfcfcf;"></div>
<div class="t" style="left:5.81px;top:322.17px;font-size:12.20px;color:#222;">16</div>
<div class="r" style="left:0.00px;top:356.00px;width:25.00px;height:1.00px;background:#cfcfcf;"></div>
<div class="t" style="left:5.81px;top:342.17px;font-size:12.20px;color:#222;">17</div>
<div class="r" style="left:0.00px;top:364.00px;width:25.00px;height:1.00px;background:#cfcfcf;"></div>
<div class="r" style="left:0;top:357px;width:25px;height:7px;overflow:hidden;">
<div class="t" style="left:5.81px;top:-7.13px;font-size:12.20px;color:#222;">18</div>
</div>
<div class="r" style="left:0.00px;top:384.00px;width:25.00px;height:1.00px;background:#cfcfcf;"></div>
<div class="t" style="left:5.81px;top:370.17px;font-size:12.20px;color:#222;">19</div>
<div class="r" style="left:0.00px;top:404.00px;width:25.00px;height:1.00px;background:#cfcfcf;"></div>
<div class="t" style="left:5.81px;top:390.17px;font-size:12.20px;color:#222;">20</div>
<div class="r" style="left:0.00px;top:424.00px;width:25.00px;height:1.00px;background:#cfcfcf;"></div>
<div class="t" style="left:5.81px;top:410.17px;font-size:12.20px;color:#222;">21</div>
<div class="r" style="left:0.00px;top:444.00px;width:25.00px;height:1.00px;background:#cfcfcf;"></div>
<div class="t" style="left:5.81px;top:430.17px;font-size:12.20px;color:#222;">22</div>
<div class="r" style="left:0.00px;top:464.00px;width:25.00px;height:1.00px;background:#cfcfcf;"></div>
<div class="t" style="left:5.81px;top:450.17px;font-size:12.20px;color:#222;">23</div>
<div class="r" style="left:0.00px;top:484.00px;width:25.00px;height:1.00px;background:#cfcfcf;"></div>
<div class="t" style="left:5.81px;top:470.17px;font-size:12.20px;color:#222;">24</div>
</div>
<div class="r" style="left:26.00px;top:226.00px;width:1321.00px;height:491.00px;background:#ffffff;"></div>
<div class="r" style="left:1344.50px;top:226.00px;width:1.00px;height:491.00px;background:#d0d0d0;"></div>
<div class="r" style="left:1345.50px;top:208.00px;width:20.50px;height:509.00px;background:#e6e6e6;"></div>
<div class="r" style="left:1348px;top:209px;width:14px;height:15px;background:#fff;border:1px solid #c8c8c8;box-sizing:border-box;"></div>
<svg class="r" style="left:1351.00px;top:214.00px;" width="8" height="5" viewBox="0 0 8 5"><path d="M0 5h8L4 0z" fill="#606060"/></svg>
<div class="r" style="left:1348px;top:224px;width:14px;height:385px;background:#fff;border:1px solid #c8c8c8;box-sizing:border-box;"></div>
<div class="r" style="left:1348px;top:703px;width:14px;height:15px;background:#fff;border:1px solid #c8c8c8;box-sizing:border-box;"></div>
<svg class="r" style="left:1351.00px;top:708.00px;" width="8" height="5" viewBox="0 0 8 5"><path d="M0 0h8L4 5z" fill="#606060"/></svg>
<div class="r" style="left:33.00px;top:227.00px;width:129.50px;height:99.70px;background:#f0b400;"></div>
<div class="r" style="left:33.00px;top:305.50px;width:388.00px;height:21.20px;background:#f0b400;"></div>
<div class="r" style="left:549.50px;top:305.50px;width:795.00px;height:21.20px;background:#f0b400;"></div>
<div class="r" style="left:162.50px;top:227.00px;width:1182.00px;height:39.00px;background:#3b3838;"></div>
<div class="r" style="left:162.50px;top:266.00px;width:1182.00px;height:39.50px;background:#6598cd;"></div>
<div class="r" style="left:419.00px;top:227.00px;width:130.50px;height:78.50px;background:#6598cd;"></div>
<div class="r" style="left:290.30px;top:227.00px;width:1.00px;height:39.00px;background:#5f6f85;"></div>
<div class="r" style="left:676.00px;top:227.00px;width:1.00px;height:39.00px;background:#5f6f85;"></div>
<div class="r" style="left:805.00px;top:227.00px;width:1.00px;height:39.00px;background:#5f6f85;"></div>
<div class="r" style="left:934.30px;top:227.00px;width:1.00px;height:39.00px;background:#5f6f85;"></div>
<div class="r" style="left:1062.40px;top:227.00px;width:1.00px;height:39.00px;background:#5f6f85;"></div>
<div class="t" style="left:72px;top:251.77px;font-size:27.2px;color:#dc4a1c;transform:scaleX(0.882);">VI<span style="color:#5e4c2e">Z</span>UAL</div>
<svg class="r" style="left:0;top:0;" width="400" height="400" viewBox="0 0 400 400"><g transform="translate(-882.7,49.0) scale(0.937,0.88)" fill="none" stroke="#6b5a3a"><path d="M986.2 235.6q1.5 1.5 2.6 1.2q3-4.6 9.1-4.6t9.1 4.6q1.1 0.3 2.6-1.2M988.8 236.8q-1.8 3-1.3 6.8q0.5 5 3.5 10.5q3 6 6.9 7.9q3.9-1.9 6.9-7.9q3-5.5 3.5-10.5q0.5-3.8-1.3-6.8" stroke-width="1.5"/><path d="M990.5 237.5q4-2 7.4 2.3q3.4-4.3 7.4-2.3M997.9 239.8v4" stroke-width="1.3"/><circle cx="993" cy="241.8" r="3.3" stroke-width="1.4"/><circle cx="1003" cy="241.8" r="3.3" stroke-width="1.4"/><circle cx="993" cy="241.8" r="1.2" fill="#6b5a3a" stroke="none"/><circle cx="1003" cy="241.8" r="1.2" fill="#6b5a3a" stroke="none"/></g><path d="M35 273.7h35" stroke="#6b5a3a" stroke-width="1.1"/><path d="M135.2 284.5h25.2" stroke="#6b5a3a" stroke-width="0.9"/></svg>
<div class="t" style="left:39px;top:281.80px;font-size:5.2px;color:#6b5020;letter-spacing:1.24px;">PLANILHAS EMPRESARIAIS</div>
<svg class="r" style="left:212.50px;top:231.00px;" width="28" height="30" viewBox="0 0 28 30"><path d="M5 0.6h12.2l5.3 5.6V10 M5 0.6V10" fill="none" stroke="#fff" stroke-width="1.2"/><path d="M17 0.6v6h5.5" fill="none" stroke="#fff" stroke-width="1.1"/><rect x="3.5" y="11.6" width="20.5" height="2.6" fill="#fff"/><rect x="0.9" y="11.6" width="1.6" height="2.6" fill="#fff"/><rect x="25" y="11.6" width="1.6" height="2.6" fill="#fff"/><path d="M0 18.5a3 3 0 0 1 3-3h21.3a3 3 0 0 1 3 3V29a1 1 0 0 1-1 1H1a1 1 0 0 1-1-1z" fill="#fff"/><path d="M6.8 18.6c4 2.2 10 2.2 14 0" fill="none" stroke="#3b3838" stroke-width="1.6"/><circle cx="3.8" cy="24.4" r="0.8" fill="#3b3838"/><circle cx="6.8" cy="24.4" r="0.8" fill="#3b3838"/><circle cx="9.8" cy="24.4" r="0.8" fill="#3b3838"/><circle cx="12.8" cy="24.4" r="0.8" fill="#3b3838"/><circle cx="15.8" cy="24.4" r="0.8" fill="#3b3838"/><circle cx="18.8" cy="24.4" r="0.8" fill="#3b3838"/><circle cx="21.8" cy="24.4" r="0.8" fill="#3b3838"/><circle cx="24.8" cy="24.4" r="0.8" fill="#3b3838"/><circle cx="5.3" cy="27.6" r="0.8" fill="#3b3838"/><circle cx="8.3" cy="27.6" r="0.8" fill="#3b3838"/><circle cx="11.3" cy="27.6" r="0.8" fill="#3b3838"/><circle cx="14.3" cy="27.6" r="0.8" fill="#3b3838"/><circle cx="17.3" cy="27.6" r="0.8" fill="#3b3838"/><circle cx="20.3" cy="27.6" r="0.8" fill="#3b3838"/><circle cx="23.3" cy="27.6" r="0.8" fill="#3b3838"/></svg>
<svg class="r" style="left:0;top:0;" width="1366" height="768" viewBox="0 0 1366 768"><path d="M340 249.5V246q0-2 2-2.3l3-0.3 3-5.6q0.5-0.6 1.5-0.6h9.5q1 0 2 0.7l5 5.4 5 0.6q3 0.5 3.3 2.7v3q0 1.5-1.3 1.5H341.3q-1.3 0-1.3-1.5z" fill="#fff"/><path d="M343.8 243.5l3-4.6h5.2v4.6zM353.4 238.9h6.2l4.2 4.6h-10.4z" fill="#3b3838"/><circle cx="347.7" cy="251.4" r="3.9" fill="#fff" stroke="#3b3838" stroke-width="1.3"/><circle cx="366.7" cy="251.4" r="3.9" fill="#fff" stroke="#3b3838" stroke-width="1.3"/><circle cx="482" cy="246.8" r="15.2" fill="#fff"/><path d="M482 231v15.8h15.5M482 246.8l10.6 10.6" fill="none" stroke="#6598cd" stroke-width="1.6"/><rect x="603.4" y="232.6" width="21" height="14.4" fill="none" stroke="#fff" stroke-width="1.3"/><circle cx="601.3" cy="238.3" r="2.6" fill="#fff"/><path d="M598.2 241.5h6.4l2-1.6 8.2-3 0.6 1-8.7 5.2-2.3 2.2v17.2h-2v-8.8h-0.9v8.8h-2.1v-12.8l-0.9 3.6h-1.5l0.5-6q0.2-5.8 0.7-5.8z" fill="#fff"/><circle cx="609.3" cy="254.5" r="1.9" fill="#fff"/><path d="M606.0 261v-2q0-1.8 3.3-1.8t3.3 1.8v2z" fill="#fff"/><circle cx="617.1" cy="254.5" r="1.9" fill="#fff"/><path d="M613.8 261v-2q0-1.8 3.3-1.8t3.3 1.8v2z" fill="#fff"/><circle cx="624.9" cy="254.5" r="1.9" fill="#fff"/><path d="M621.6 261v-2q0-1.8 3.3-1.8t3.3 1.8v2z" fill="#fff"/><path d="M736.2 230.2h16.7v11.7h-10l-3 3.1v-3.1h-3.7z" fill="#fff"/><text x="741.6" y="240" font-size="10.5" font-weight="bold" fill="#3b3838" font-family="Liberation Sans">?</text><circle cx="731.8" cy="244.2" r="3.7" fill="#fff"/><path d="M725 256.2v-2.5q0.5-4.5 6.8-4.5q4 0 5.5 2.2l-3 4.8z" fill="#fff"/><circle cx="741.4" cy="249.7" r="3.9" fill="#fff" stroke="#3b3838" stroke-width="0.9"/><path d="M733.6 262.3v-3q0.5-4.6 7.8-4.6t7.8 4.6v3z" fill="#fff" stroke="#3b3838" stroke-width="0.9"/><path d="M865.2 255.2l-3.5-5.2a9.5 9.5 0 1 1 16.4 0l-3.5 5.2z" fill="none" stroke="#fff" stroke-width="2.1"/><path d="M865.5 258.7h8.9M867.3 261.8h5.2" stroke="#fff" stroke-width="1.9"/><path d="M869.9 229.4v4.4M854 245.3h3.9M881.6 245.3h3.9M857.9 234.6l3.2 2.6M881.9 234.6l-3.2 2.6M858.7 255.7l2.8-2.7M881.1 255.7l-2.8-2.7" stroke="#fff" stroke-width="1.6"/><circle cx="869.7" cy="245.3" r="3.4" fill="none" stroke="#fff" stroke-width="2.2" stroke-dasharray="1.9 0.8"/><circle cx="869.7" cy="245.3" r="2.3" fill="none" stroke="#fff" stroke-width="1.2"/><path d="M979.2 254.4h37.5" stroke="#fff" stroke-width="1.5"/><path d="M986.2 235.6q1.5 1.5 2.6 1.2q3-4.6 9.1-4.6t9.1 4.6q1.1 0.3 2.6-1.2M988.8 236.8q-1.8 3-1.3 6.8q0.5 5 3.5 10.5q3 6 6.9 7.9q3.9-1.9 6.9-7.9q3-5.5 3.5-10.5q0.5-3.8-1.3-6.8" fill="none" stroke="#fff" stroke-width="1.5"/><path d="M990.5 237.5q4-2 7.4 2.3q3.4-4.3 7.4-2.3M997.9 239.8v4" fill="none" stroke="#fff" stroke-width="1.3"/><circle cx="993" cy="241.8" r="3.1" fill="none" stroke="#fff" stroke-width="1.4"/><circle cx="1003" cy="241.8" r="3.1" fill="none" stroke="#fff" stroke-width="1.4"/><circle cx="993" cy="241.8" r="1.4" fill="#aaa"/><circle cx="1003" cy="241.8" r="1.4" fill="#aaa"/><path d="M997.9 256.5v1.8" stroke="#fff" stroke-width="1"/></svg>
<div class="t" style="left:189.00px;top:279.34px;font-size:14.60px;color:#f4f8fc;transform:scaleX(1.0670);-webkit-text-stroke:0.35px #f4f8fc;">Cadastros</div>
<div class="t" style="left:317.50px;top:269.64px;font-size:14.60px;color:#f4f8fc;transform:scaleX(1.0820);-webkit-text-stroke:0.35px #f4f8fc;">Cotação de</div>
<div class="t" style="left:326.00px;top:288.64px;font-size:14.60px;color:#f4f8fc;transform:scaleX(1.0781);-webkit-text-stroke:0.35px #f4f8fc;">Produtos</div>
<div class="t" style="left:448.50px;top:280.39px;font-size:14.60px;color:#f4f8fc;transform:scaleX(1.0710);-webkit-text-stroke:0.35px #f4f8fc;">Dashboard</div>
<div class="t" style="left:578.00px;top:280.39px;font-size:14.60px;color:#f4f8fc;transform:scaleX(1.0838);-webkit-text-stroke:0.35px #f4f8fc;">Instruções</div>
<div class="t" style="left:714.30px;top:280.39px;font-size:14.60px;color:#f4f8fc;transform:scaleX(1.0560);-webkit-text-stroke:0.35px #f4f8fc;">Dúvidas</div>
<div class="t" style="left:831.80px;top:280.39px;font-size:14.60px;color:#f4f8fc;transform:scaleX(1.0783);-webkit-text-stroke:0.35px #f4f8fc;">Sugestões</div>
<div class="t" style="left:964.00px;top:281.14px;font-size:14.60px;color:#f4f8fc;transform:scaleX(1.0938);-webkit-text-stroke:0.35px #f4f8fc;">Sobre nós</div>
<div class="t" style="left:36.70px;top:339.45px;font-size:13.52px;font-weight:bold;color:#141414;transform:scaleX(0.9475);">Relação da quantidade de produtos vencedores por Fornecedor</div>
<div class="t" style="left:1060.00px;top:338.55px;font-size:13.52px;font-weight:bold;color:#141414;transform:scaleX(0.9467);">Fornecedor Com a Melhor Cotação</div>
<div class="t" style="left:1060.00px;top:366.95px;font-size:13.52px;font-weight:bold;color:#141414;transform:scaleX(0.8486);">FORNECEDOR TESTE 3</div>
<div class="t" style="left:36.10px;top:594.05px;font-size:13.52px;font-weight:bold;color:#141414;transform:scaleX(0.9435);">Gráfico em Barras do valor total de cada fornecedor</div>
<div class="t" style="left:36.70px;top:366.55px;font-size:13.52px;font-weight:bold;color:#141414;transform:scaleX(0.8467);">FORNECEDOR TESTE 1</div>
<div class="t" style="left:36.70px;top:486.15px;font-size:13.52px;font-weight:bold;color:#141414;transform:scaleX(0.8467);">FORNECEDOR TESTE 6</div>
<div class="t" style="left:228.90px;top:366.55px;font-size:13.52px;font-weight:bold;color:#141414;transform:scaleX(0.8467);">FORNECEDOR TESTE 2</div>
<div class="t" style="left:228.90px;top:486.15px;font-size:13.52px;font-weight:bold;color:#141414;transform:scaleX(0.8467);">FORNECEDOR TESTE 7</div>
<div class="t" style="left:420.70px;top:366.55px;font-size:13.52px;font-weight:bold;color:#141414;transform:scaleX(0.8467);">FORNECEDOR TESTE 3</div>
<div class="t" style="left:420.70px;top:486.15px;font-size:13.52px;font-weight:bold;color:#141414;transform:scaleX(0.8467);">FORNECEDOR TESTE 8</div>
<div class="t" style="left:612.60px;top:366.55px;font-size:13.52px;font-weight:bold;color:#141414;transform:scaleX(0.8493);">FORNECEDOR TESTE 4</div>
<div class="t" style="left:612.60px;top:486.15px;font-size:13.52px;font-weight:bold;color:#141414;transform:scaleX(0.8467);">FORNECEDOR TESTE 9</div>
<div class="t" style="left:804.80px;top:366.55px;font-size:13.52px;font-weight:bold;color:#141414;transform:scaleX(0.8447);">FORNECEDOR TESTE 5</div>
<div class="t" style="left:804.80px;top:486.15px;font-size:13.52px;font-weight:bold;color:#141414;transform:scaleX(0.8506);">FORNECEDOR TESTE 10</div>
<div class="t" style="left:420.70px;top:448.15px;font-size:11.63px;color:#222;transform:scaleX(0.8778);">LOJA VENCEDORA EM QUANT.</div>
<div class="r" style="left:34.0px;top:386.0px;width:181.8px;height:43.1px;background:#f0b400;border-radius:6px;box-shadow:0.5px 2px 3px 0.5px rgba(85,65,0,0.65);"></div>
<div class="r" style="left:225.2px;top:386.5px;width:181.3px;height:42.2px;background:#f0b400;border-radius:6px;box-shadow:0.5px 2px 3px 0.5px rgba(85,65,0,0.65);"></div>
<div class="r" style="left:415.5px;top:386.0px;width:181.6px;height:42.7px;background:#f0b400;border-radius:6px;box-shadow:0.5px 2px 3px 0.5px rgba(85,65,0,0.65);"></div>
<div class="r" style="left:606.0px;top:386.2px;width:181.3px;height:42.7px;background:#f0b400;border-radius:6px;box-shadow:0.5px 2px 3px 0.5px rgba(85,65,0,0.65);"></div>
<div class="r" style="left:796.7px;top:385.0px;width:181.3px;height:42.7px;background:#f0b400;border-radius:6px;box-shadow:0.5px 2px 3px 0.5px rgba(85,65,0,0.65);"></div>
<div class="r" style="left:34.5px;top:508.4px;width:182.0px;height:42.2px;background:#f0b400;border-radius:6px;box-shadow:0.5px 2px 3px 0.5px rgba(85,65,0,0.65);"></div>
<div class="r" style="left:225.5px;top:508.0px;width:181.5px;height:42.5px;background:#f0b400;border-radius:6px;box-shadow:0.5px 2px 3px 0.5px rgba(85,65,0,0.65);"></div>
<div class="r" style="left:416.0px;top:508.4px;width:181.3px;height:42.1px;background:#f0b400;border-radius:6px;box-shadow:0.5px 2px 3px 0.5px rgba(85,65,0,0.65);"></div>
<div class="r" style="left:606.5px;top:508.0px;width:181.0px;height:42.5px;background:#f0b400;border-radius:6px;box-shadow:0.5px 2px 3px 0.5px rgba(85,65,0,0.65);"></div>
<div class="r" style="left:798.2px;top:507.0px;width:181.3px;height:42.5px;background:#f0b400;border-radius:6px;box-shadow:0.5px 2px 3px 0.5px rgba(85,65,0,0.65);"></div>
<div class="r" style="left:178.0px;top:391.2px;width:33.0px;height:33.5px;background:#ef4a2e;border-radius:4px;box-shadow:0.5px 1.5px 2.5px 0.5px rgba(120,40,0,0.55);"></div>
<div class="r" style="left:369.5px;top:390.0px;width:32.5px;height:34.0px;background:#ef4a2e;border-radius:4px;box-shadow:0.5px 1.5px 2.5px 0.5px rgba(120,40,0,0.55);"></div>
<div class="r" style="left:560.0px;top:391.0px;width:33.0px;height:33.9px;background:#ef4a2e;border-radius:4px;box-shadow:0.5px 1.5px 2.5px 0.5px rgba(120,40,0,0.55);"></div>
<div class="r" style="left:751.7px;top:390.9px;width:32.5px;height:33.9px;background:#ef4a2e;border-radius:4px;box-shadow:0.5px 1.5px 2.5px 0.5px rgba(120,40,0,0.55);"></div>
<div class="r" style="left:942.4px;top:390.0px;width:32.9px;height:34.0px;background:#ef4a2e;border-radius:4px;box-shadow:0.5px 1.5px 2.5px 0.5px rgba(120,40,0,0.55);"></div>
<div class="r" style="left:178.7px;top:513.4px;width:33.3px;height:33.6px;background:#ef4a2e;border-radius:4px;box-shadow:0.5px 1.5px 2.5px 0.5px rgba(120,40,0,0.55);"></div>
<div class="r" style="left:369.8px;top:512.7px;width:33.0px;height:33.8px;background:#ef4a2e;border-radius:4px;box-shadow:0.5px 1.5px 2.5px 0.5px rgba(120,40,0,0.55);"></div>
<div class="r" style="left:560.9px;top:513.4px;width:33.0px;height:33.6px;background:#ef4a2e;border-radius:4px;box-shadow:0.5px 1.5px 2.5px 0.5px rgba(120,40,0,0.55);"></div>
<div class="r" style="left:752.0px;top:513.4px;width:33.0px;height:33.6px;background:#ef4a2e;border-radius:4px;box-shadow:0.5px 1.5px 2.5px 0.5px rgba(120,40,0,0.55);"></div>
<div class="r" style="left:943.9px;top:510.9px;width:32.1px;height:34.2px;background:#ef4a2e;border-radius:4px;box-shadow:0.5px 1.5px 2.5px 0.5px rgba(120,40,0,0.55);"></div>
<div class="t" style="left:190.80px;top:402.12px;font-size:13.08px;font-weight:bold;color:#fff;transform:scaleX(1.0102);">22</div>
<div class="t" style="left:381.90px;top:400.52px;font-size:13.08px;font-weight:bold;color:#fff;">1</div>
<div class="t" style="left:572.30px;top:402.12px;font-size:13.08px;font-weight:bold;color:#fff;transform:scaleX(1.0034);">27</div>
<div class="t" style="left:762.60px;top:401.12px;font-size:13.08px;font-weight:bold;color:#fff;">0</div>
<div class="t" style="left:954.80px;top:399.72px;font-size:13.08px;font-weight:bold;color:#fff;">0</div>
<div class="t" style="left:191.20px;top:523.42px;font-size:13.08px;font-weight:bold;color:#fff;">0</div>
<div class="t" style="left:382.60px;top:523.42px;font-size:13.08px;font-weight:bold;color:#fff;">0</div>
<div class="t" style="left:573.40px;top:523.42px;font-size:13.08px;font-weight:bold;color:#fff;">0</div>
<div class="t" style="left:764.60px;top:524.72px;font-size:13.08px;font-weight:bold;color:#fff;">0</div>
<div class="t" style="left:955.60px;top:521.22px;font-size:13.08px;font-weight:bold;color:#fff;">0</div>
<div class="t" style="left:39.00px;top:395.88px;font-size:9.59px;color:#fff8dc;transform:scaleX(0.9166);-webkit-text-stroke:0.25px #fff8dc;">ITEN(S) COM PREÇO MENOR</div>
<div class="t" style="left:39.00px;top:408.58px;font-size:9.59px;color:#fff8dc;transform:scaleX(0.8846);-webkit-text-stroke:0.25px #fff8dc;">QUE OS CONCORRENTES</div>
<div class="t" style="left:237.00px;top:396.68px;font-size:9.59px;color:#fff8dc;transform:scaleX(0.9122);-webkit-text-stroke:0.25px #fff8dc;">ITEN(S) COM PREÇO MENOR</div>
<div class="t" style="left:237.00px;top:409.88px;font-size:9.59px;color:#fff8dc;transform:scaleX(0.8805);-webkit-text-stroke:0.25px #fff8dc;">QUE OS CONCORRENTES</div>
<div class="t" style="left:423.70px;top:396.28px;font-size:9.59px;color:#fff8dc;transform:scaleX(0.9159);-webkit-text-stroke:0.25px #fff8dc;">ITEN(S) COM PREÇO MENOR</div>
<div class="t" style="left:423.70px;top:408.68px;font-size:9.59px;color:#fff8dc;transform:scaleX(0.8846);-webkit-text-stroke:0.25px #fff8dc;">QUE OS CONCORRENTES</div>
<div class="r" style="left:1057.20px;top:382.00px;width:256.20px;height:61.00px;background:#6598cd;"></div>
<div class="t" style="left:1072.90px;top:412.78px;font-size:24.71px;font-weight:bold;color:#fff;transform:scaleX(0.9466);">R$</div>
<div class="t" style="left:1181.00px;top:412.78px;font-size:24.71px;font-weight:bold;color:#fff;transform:scaleX(1.0716);">13.953,92</div>
<svg class="r" style="left:0;top:0;" width="1366" height="768" viewBox="0 0 1366 768"><g fill="#ef4a2e"><path d="M1162 482.5H1218V518C1218 531 1209 543 1195.6 547H1184.4C1171 543 1162 531 1162 518Z"/><path d="M1162 491.8H1145.2V512C1145.2 532 1160 545.5 1183 547.5L1184 541.5C1164 537.5 1152.8 527 1152.8 512V499H1162Z"/><path d="M1218 491.8H1234.8V512C1234.8 532 1220 545.5 1197 547.5L1196 541.5C1216 537.5 1227.2 527 1227.2 512V499H1218Z"/><rect x="1184.4" y="544" width="11.2" height="28"/><path d="M1174.2 575V573.5Q1174.2 570.8 1177.5 570.8H1202.1Q1205.4 570.8 1205.4 573.5V575Z"/><path d="M1162 582.5V578.5Q1162 574.5 1166 574.5H1213.6Q1217.6 574.5 1217.6 578.5V582.5Z"/></g></svg>
<div class="t" style="left:1184.00px;top:496.41px;font-size:11.92px;font-weight:bold;color:#fff;transform:scaleX(1.1291);">1º</div>
<div class="t" style="left:1173.60px;top:511.91px;font-size:11.92px;font-weight:bold;color:#fff;transform:scaleX(1.0501);">lugar</div>
<div class="r" style="left:32px;top:610px;width:1312px;height:100px;background:#f7f7f7;box-shadow:0 0 3px 2px #f9f9f9;"></div>
<div class="r" style="left:45.50px;top:682.00px;width:1279.50px;height:1.00px;background:#d9d9d9;"></div>
<div class="r" style="left:45.50px;top:682.00px;width:1.00px;height:3.00px;background:#d9d9d9;"></div>
<div class="r" style="left:173.45px;top:682.00px;width:1.00px;height:3.00px;background:#d9d9d9;"></div>
<div class="r" style="left:301.40px;top:682.00px;width:1.00px;height:3.00px;background:#d9d9d9;"></div>
<div class="r" style="left:429.35px;top:682.00px;width:1.00px;height:3.00px;background:#d9d9d9;"></div>
<div class="r" style="left:557.30px;top:682.00px;width:1.00px;height:3.00px;background:#d9d9d9;"></div>
<div class="r" style="left:685.25px;top:682.00px;width:1.00px;height:3.00px;background:#d9d9d9;"></div>
<div class="r" style="left:813.20px;top:682.00px;width:1.00px;height:3.00px;background:#d9d9d9;"></div>
<div class="r" style="left:941.15px;top:682.00px;width:1.00px;height:3.00px;background:#d9d9d9;"></div>
<div class="r" style="left:1069.10px;top:682.00px;width:1.00px;height:3.00px;background:#d9d9d9;"></div>
<div class="r" style="left:1197.05px;top:682.00px;width:1.00px;height:3.00px;background:#d9d9d9;"></div>
<div class="r" style="left:1325.00px;top:682.00px;width:1.00px;height:3.00px;background:#d9d9d9;"></div>
<div class="r" style="left:90.20px;top:648.00px;width:39.60px;height:34.00px;background:#ef4a2c;"></div>
<div class="r" style="left:216.80px;top:645.00px;width:41.00px;height:37.00px;background:#55ab44;"></div>
<div class="r" style="left:345.00px;top:648.00px;width:39.60px;height:34.00px;background:#6699cc;"></div>
<div class="t" style="left:79.20px;top:628.67px;font-size:10.90px;color:#404040;transform:scaleX(0.9700);">R$ 14.186,79</div>
<div class="t" style="left:207.00px;top:625.77px;font-size:10.90px;color:#404040;transform:scaleX(0.9806);">R$ 15.311,64</div>
<div class="t" style="left:334.80px;top:630.17px;font-size:10.90px;color:#404040;transform:scaleX(0.9716);">R$ 13.953,92</div>
<div class="t" style="left:483.60px;top:662.07px;font-size:10.90px;color:#404040;transform:scaleX(0.9226);">R$ -</div>
<div class="t" style="left:611.30px;top:662.07px;font-size:10.90px;color:#404040;transform:scaleX(0.9226);">R$ -</div>
<div class="t" style="left:739.00px;top:662.07px;font-size:10.90px;color:#404040;transform:scaleX(0.9226);">R$ -</div>
<div class="t" style="left:866.70px;top:662.07px;font-size:10.90px;color:#404040;transform:scaleX(0.9226);">R$ -</div>
<div class="t" style="left:994.40px;top:662.07px;font-size:10.90px;color:#404040;transform:scaleX(0.9226);">R$ -</div>
<div class="t" style="left:1122.10px;top:662.07px;font-size:10.90px;color:#404040;transform:scaleX(0.9226);">R$ -</div>
<div class="t" style="left:1249.80px;top:662.07px;font-size:10.90px;color:#404040;transform:scaleX(0.9226);">R$ -</div>
<div class="t" style="left:55.25px;top:692.15px;font-size:11.05px;font-weight:bold;color:#111;transform:scaleX(0.8565);">FORNECEDOR TESTE 1</div>
<div class="t" style="left:183.20px;top:692.15px;font-size:11.05px;font-weight:bold;color:#111;transform:scaleX(0.8565);">FORNECEDOR TESTE 2</div>
<div class="t" style="left:311.15px;top:692.15px;font-size:11.05px;font-weight:bold;color:#111;transform:scaleX(0.8565);">FORNECEDOR TESTE 3</div>
<div class="t" style="left:439.10px;top:692.15px;font-size:11.05px;font-weight:bold;color:#111;transform:scaleX(0.8565);">FORNECEDOR TESTE 4</div>
<div class="t" style="left:567.05px;top:692.15px;font-size:11.05px;font-weight:bold;color:#111;transform:scaleX(0.8565);">FORNECEDOR TESTE 5</div>
<div class="t" style="left:695.00px;top:692.15px;font-size:11.05px;font-weight:bold;color:#111;transform:scaleX(0.8565);">FORNECEDOR TESTE 6</div>
<div class="t" style="left:822.95px;top:692.15px;font-size:11.05px;font-weight:bold;color:#111;transform:scaleX(0.8565);">FORNECEDOR TESTE 7</div>
<div class="t" style="left:950.90px;top:692.15px;font-size:11.05px;font-weight:bold;color:#111;transform:scaleX(0.8565);">FORNECEDOR TESTE 8</div>
<div class="t" style="left:1078.85px;top:692.15px;font-size:11.05px;font-weight:bold;color:#111;transform:scaleX(0.8565);">FORNECEDOR TESTE 9</div>
<div class="t" style="left:1203.20px;top:692.15px;font-size:11.05px;font-weight:bold;color:#111;transform:scaleX(0.8712);">FORNECEDOR TESTE 10</div>
<div class="r" style="left:0.00px;top:717.00px;width:1366.00px;height:28.00px;background:#e6e6e6;"></div>
<div class="r" style="left:0.00px;top:717.00px;width:1345.00px;height:1.00px;background:#c6c6c6;"></div>
<svg class="r" style="left:27.00px;top:726.00px;" width="5" height="9" viewBox="0 0 5 9"><path d="M5 0v9L0 4.5z" fill="#c0c0c0"/></svg>
<svg class="r" style="left:55.00px;top:726.00px;" width="5" height="9" viewBox="0 0 5 9"><path d="M0 0v9L5 4.5z" fill="#c0c0c0"/></svg>
<div class="r" style="left:100.70px;top:721.00px;width:1.00px;height:20.00px;background:#a8a8a8;"></div>
<div class="r" style="left:172.70px;top:721.00px;width:1.00px;height:20.00px;background:#a8a8a8;"></div>
<div class="r" style="left:265.40px;top:721.00px;width:1.00px;height:20.00px;background:#a8a8a8;"></div>
<div class="r" style="left:463.00px;top:721.00px;width:1.00px;height:20.00px;background:#a8a8a8;"></div>
<div class="r" style="left:515.50px;top:721.00px;width:1.00px;height:20.00px;background:#a8a8a8;"></div>
<div class="r" style="left:564.50px;top:721.00px;width:1.00px;height:20.00px;background:#a8a8a8;"></div>
<div class="r" style="left:611.30px;top:721.00px;width:1.00px;height:20.00px;background:#a8a8a8;"></div>
<div class="r" style="left:352px;top:717px;width:66.6px;height:25px;background:#fff;"></div>
<div class="r" style="left:352.00px;top:739.00px;width:66.60px;height:2.00px;background:#217346;"></div>
<div class="t" style="left:113.50px;top:724.47px;font-size:12.20px;color:#444;transform:scaleX(0.9591);">CONFIG</div>
<div class="t" style="left:186.00px;top:724.47px;font-size:12.20px;color:#444;transform:scaleX(0.9495);">CADFORNE</div>
<div class="t" style="left:278.00px;top:724.47px;font-size:12.20px;color:#444;transform:scaleX(0.9761);">COTACAO</div>
<div class="t" style="left:363.00px;top:724.47px;font-size:12.20px;font-weight:bold;color:#217346;transform:scaleX(1.0156);">DASH1</div>
<div class="t" style="left:430.00px;top:724.47px;font-size:12.20px;color:#444;transform:scaleX(0.9834);">INS</div>
<div class="t" style="left:476.00px;top:724.47px;font-size:12.20px;color:#444;transform:scaleX(1.0093);">DUV</div>
<div class="t" style="left:527.00px;top:724.47px;font-size:12.20px;color:#444;transform:scaleX(0.9078);">SUG</div>
<div class="t" style="left:576.00px;top:724.47px;font-size:12.20px;color:#444;transform:scaleX(0.9979);">LUZ</div>
<svg class="r" style="left:644.00px;top:722.00px;" width="16" height="16" viewBox="0 0 16 16"><circle cx="8" cy="8" r="7" fill="none" stroke="#666" stroke-width="1.2"/><path d="M8 4v8M4 8h8" stroke="#666" stroke-width="1.3"/></svg>
<div class="r" style="left:987.00px;top:727.00px;width:2.00px;height:2.00px;background:#b0b0b0;"></div>
<div class="r" style="left:987.00px;top:731.00px;width:2.00px;height:2.00px;background:#b0b0b0;"></div>
<div class="r" style="left:987.00px;top:735.00px;width:2.00px;height:2.00px;background:#b0b0b0;"></div>
<div class="r" style="left:1005px;top:724.5px;width:14px;height:14px;background:#fff;border:1px solid #c8c8c8;box-sizing:border-box;"></div>
<svg class="r" style="left:1009.00px;top:728.00px;" width="5" height="8" viewBox="0 0 5 8"><path d="M5 0v8L0 4z" fill="#555"/></svg>
<div class="r" style="left:1019px;top:724.5px;width:86px;height:14px;background:#fff;border:1px solid #c8c8c8;box-sizing:border-box;"></div>
<div class="r" style="left:1105.00px;top:725.00px;width:225.00px;height:13.00px;background:#dcdcdc;"></div>
<div class="r" style="left:1330px;top:724.5px;width:14px;height:14px;background:#fff;border:1px solid #c8c8c8;box-sizing:border-box;"></div>
<svg class="r" style="left:1335.00px;top:728.00px;" width="5" height="8" viewBox="0 0 5 8"><path d="M0 0v8L5 4z" fill="#555"/></svg>
<div class="r" style="left:0.00px;top:745.00px;width:1366.00px;height:23.00px;background:#f3f3f3;"></div>
<div class="r" style="left:0.00px;top:745.00px;width:1366.00px;height:1.00px;background:#d8d8d8;"></div>
<svg class="r" style="left:8.00px;top:750.00px;" width="14" height="12.5" viewBox="0 0 14 12.5"><rect x="0.5" y="0.5" width="11" height="10" fill="none" stroke="#444"/><path d="M0.5 3h11M2 5h3M2 7h3" stroke="#444"/><circle cx="9" cy="8" r="3" fill="#f3f3f3" stroke="#444"/><circle cx="9" cy="8" r="1.2" fill="#444"/></svg>
<div class="r" style="left:1066.00px;top:745.00px;width:40.00px;height:20.50px;background:#c8c8c8;"></div>
<svg class="r" style="left:1079.00px;top:749.00px;" width="13" height="13" viewBox="0 0 13 13"><path d="M0.5 0.5h12v12h-12z M0.5 4.5h12M0.5 8.5h12M4.5 0.5v12M8.5 0.5v12" fill="none" stroke="#333" stroke-width="1"/></svg>
<svg class="r" style="left:1118.00px;top:749.00px;" width="15" height="13" viewBox="0 0 15 13"><rect x="0.5" y="0.5" width="14" height="12" fill="none" stroke="#444"/><rect x="3.5" y="2.5" width="8" height="8" fill="none" stroke="#444"/><path d="M5 5h5M5 7h5" stroke="#444"/></svg>
<svg class="r" style="left:1159.00px;top:749.00px;" width="14" height="13" viewBox="0 0 14 13"><rect x="0.5" y="0.5" width="13" height="12" fill="none" stroke="#444"/><path d="M0.5 9.5h5v-9M9.5 0.5v5h4" fill="none" stroke="#444"/></svg>
<div class="r" style="left:1192.00px;top:755.00px;width:8.00px;height:1.00px;background:#444;"></div>
<div class="r" style="left:1204.60px;top:755.50px;width:100.00px;height:1.00px;background:#a0a0a0;"></div>
<div class="r" style="left:1252.60px;top:751.00px;width:5.60px;height:10.00px;background:#666;"></div>
<div class="r" style="left:1309.00px;top:755.00px;width:8.60px;height:1.00px;background:#444;"></div>
<div class="r" style="left:1312.80px;top:751.00px;width:1.00px;height:9.00px;background:#444;"></div>
<div class="t" style="left:1330.30px;top:750.67px;font-size:12.20px;color:#444;transform:scaleX(0.8653);">100%</div>
</body></html>
